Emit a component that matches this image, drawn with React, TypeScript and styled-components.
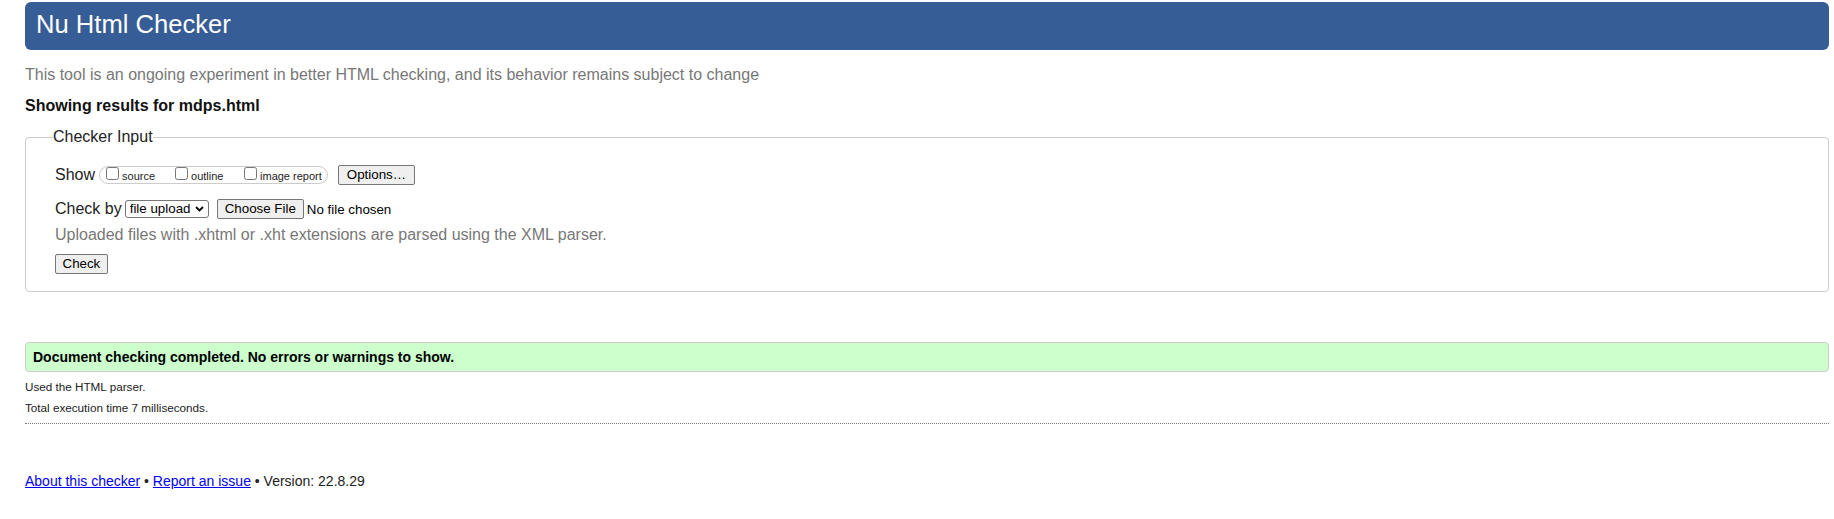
import React from "react";
import styled, { createGlobalStyle } from "styled-components";

const GlobalStyle = createGlobalStyle`
  html, body {
    margin: 0;
    padding: 0;
    background: #ffffff;
  }
  body {
    font-family: "Liberation Sans", Arial, Helvetica, sans-serif;
    color: #222222;
  }
  * { box-sizing: border-box; }
`;

const Page = styled.div`
  padding: 2px 5px 0 25px;
`;

const Header = styled.h1`
  margin: 0;
  height: 48px;
  padding: 0 0 4px 11px;
  background: #365d95;
  color: #ffffff;
  border-radius: 6px;
  font-size: 25.6px;
  font-weight: normal;
  line-height: 44px;
`;

const Subtitle = styled.p`
  margin: 16px 0 0;
  font-size: 16px;
  line-height: 18.4px;
  color: #777777;
`;

const ResultsTitle = styled.h2`
  margin: 13px 0 0;
  font-size: 16px;
  line-height: 18.4px;
  font-weight: bold;
  color: #111111;
`;

const Fieldset = styled.fieldset`
  margin: 12px 0 0;
  min-width: 0;
  border: 1px solid #cccccc;
  border-radius: 4px;
  padding: 19px 0 17px 29px;
`;

const Legend = styled.legend`
  margin-left: -2px;
  padding: 0;
  font-size: 16px;
  line-height: 18.4px;
  color: #222222;
`;

const Row = styled.div<{ $top?: number }>`
  display: flex;
  align-items: center;
  height: 20px;
  margin-top: ${(p) => p.$top ?? 0}px;
`;

const RowLabel = styled.span`
  font-size: 16px;
  line-height: 18.4px;
  color: #222222;
`;

const Pill = styled.span`
  display: inline-flex;
  align-items: center;
  height: 18px;
  margin-left: 4px;
  padding: 0 5px 0 2px;
  border: 1px solid #cccccc;
  border-radius: 9px;
`;

const OptionLabel = styled.label`
  display: inline-flex;
  align-items: baseline;
  min-width: 69px;
  font-size: 11px;
  line-height: 13px;
  color: #222222;
`;

const Checkbox = styled.input.attrs({ type: "checkbox" })`
  appearance: none;
  -webkit-appearance: none;
  width: 13px;
  height: 13px;
  margin: 0 3px 0 4px;
  border: 1px solid #767676;
  border-radius: 2.5px;
  background: #ffffff;
`;

const Button = styled.button<{ $pad?: number; $left?: number }>`
  height: 20px;
  margin: 0 0 0 ${(p) => p.$left ?? 0}px;
  padding: 0 ${(p) => p.$pad ?? 7}px;
  font-family: "Liberation Sans", Arial, Helvetica, sans-serif;
  font-size: 13.33px;
  line-height: 18px;
  color: #000000;
  background: #efefef;
  border: 1px solid #767676;
  border-radius: 2px;
`;

const SelectWrap = styled.span`
  position: relative;
  display: inline-flex;
  margin-left: 3px;
`;

const Select = styled.select`
  appearance: none;
  -webkit-appearance: none;
  width: 84px;
  height: 18px;
  padding: 0 0 0 4px;
  font-family: "Liberation Sans", Arial, Helvetica, sans-serif;
  font-size: 13.33px;
  line-height: 16px;
  color: #000000;
  background: #ffffff;
  border: 1px solid #767676;
  border-radius: 3px;
`;

const Chevron = styled.svg`
  position: absolute;
  right: 5px;
  top: 6px;
  width: 9px;
  height: 6px;
  pointer-events: none;
`;

const FileText = styled.span`
  margin-left: 3px;
  font-size: 13.33px;
  color: #000000;
`;

const Note = styled.p`
  margin: 7px 0 0;
  font-size: 16px;
  line-height: 18.4px;
  color: #777777;
`;

const CheckButtonRow = styled.div`
  display: flex;
  margin-top: 9px;
`;

const Success = styled.div`
  margin-top: 50px;
  padding: 6px 7px;
  background: #ccffcc;
  border: 1px solid #cccccc;
  border-radius: 4px;
  font-size: 14px;
  line-height: 16px;
  font-weight: bold;
  color: #000000;
`;

const Info = styled.div`
  margin-top: 4px;
  padding-bottom: 5px;
  border-bottom: 1px dotted #777777;
`;

const InfoLine = styled.p`
  margin: 0;
  font-size: 11.7px;
  line-height: 21px;
  color: #222222;
`;

const Footer = styled.p`
  margin: 49px 0 0;
  font-size: 14px;
  line-height: 16px;
  color: #222222;
`;

const Link = styled.a`
  color: #0000ee;
  text-decoration: underline;
`;

export default function App() {
  return (
    <>
      <GlobalStyle />
      <Page>
        <Header>Nu Html Checker</Header>
        <Subtitle>
          This tool is an ongoing experiment in better HTML checking, and its behavior remains subject to change
        </Subtitle>
        <ResultsTitle>Showing results for mdps.html</ResultsTitle>
        <Fieldset>
          <Legend>Checker Input</Legend>
          <Row>
            <RowLabel>Show</RowLabel>
            <Pill>
              <OptionLabel>
                <Checkbox />
                source
              </OptionLabel>
              <OptionLabel>
                <Checkbox />
                outline
              </OptionLabel>
              <OptionLabel>
                <Checkbox />
                image report
              </OptionLabel>
            </Pill>
            <Button $left={10} $pad={8}>Options…</Button>
          </Row>
          <Row $top={14}>
            <RowLabel>Check by</RowLabel>
            <SelectWrap>
              <Select defaultValue="file">
                <option value="file">file upload</option>
                <option value="address">address</option>
                <option value="text">text input</option>
              </Select>
              <Chevron viewBox="0 0 9 6">
                <path d="M1 1 L4.5 4.5 L8 1" fill="none" stroke="#000" strokeWidth="1.8" />
              </Chevron>
            </SelectWrap>
            <Button $left={8}>Choose File</Button>
            <FileText>No file chosen</FileText>
          </Row>
          <Note>Uploaded files with .xhtml or .xht extensions are parsed using the XML parser.</Note>
          <CheckButtonRow>
            <Button $pad={6.5}>Check</Button>
          </CheckButtonRow>
        </Fieldset>
        <Success>Document checking completed. No errors or warnings to show.</Success>
        <Info>
          <InfoLine>Used the HTML parser.</InfoLine>
          <InfoLine>Total execution time 7 milliseconds.</InfoLine>
        </Info>
        <Footer>
          <Link href="#about">About this checker</Link> • <Link href="#issue">Report an issue</Link> • Version: 22.8.29
        </Footer>
      </Page>
    </>
  );
}
